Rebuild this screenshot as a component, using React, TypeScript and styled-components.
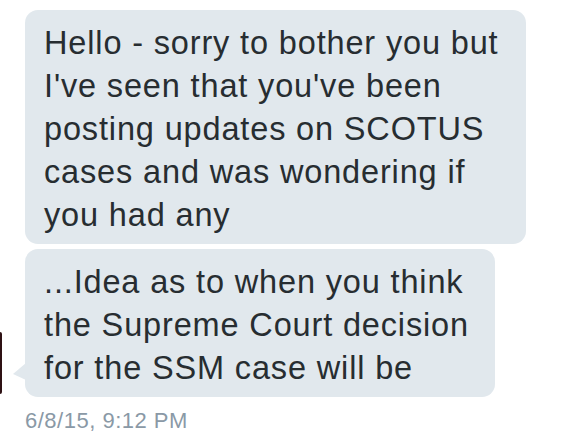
import React from "react";
import styled, { createGlobalStyle } from "styled-components";

const GlobalStyle = createGlobalStyle`
  html, body {
    margin: 0;
    padding: 0;
    background: #ffffff;
  }
  body {
    font-family: "Liberation Sans", Arial, Helvetica, sans-serif;
    -webkit-font-smoothing: antialiased;
  }
`;

const Thread = styled.div`
  display: flex;
  flex-direction: column;
  gap: 5px;
  padding: 10px 0 0 0;
`;

const Row = styled.div`
  display: flex;
  align-items: flex-end;
`;

const AvatarSlot = styled.div`
  width: 25px;
  flex-shrink: 0;
  display: flex;
  align-items: flex-end;
  padding-bottom: 3px;
`;

const AvatarEdge = styled.div`
  width: 2px;
  height: 62px;
  background: #2e1114;
  border-radius: 0 2px 2px 0;
`;

const Bubble = styled.div<{ $width: number; $tail?: boolean }>`
  position: relative;
  box-sizing: border-box;
  width: ${(p) => p.$width}px;
  padding: 12px 6px 7px 19px;
  background: #e1e8ed;
  border-radius: 13px;
  color: #272d31;
  font-size: 32.5px;
  letter-spacing: 0.85px;
  line-height: 43px;
  white-space: pre-line;

  &::before {
    content: ${(p) => (p.$tail ? '""' : "none")};
    position: absolute;
    left: -12px;
    bottom: 17px;
    width: 0;
    height: 0;
    border-right: 13px solid #e1e8ed;
    border-top: 11px solid transparent;
    border-bottom: 6px solid transparent;
  }
`;

const Stamp = styled.div`
  margin: 12px 0 0 25px;
  color: #8a99a6;
  font-size: 22px;
  letter-spacing: 0.5px;
  line-height: 24px;
`;

const messages = [
  {
    text: "Hello - sorry to bother you but\nI've seen that you've been\nposting updates on SCOTUS\ncases and was wondering if\nyou had any",
    width: 501,
    last: false,
  },
  {
    text: "...Idea as to when you think\nthe Supreme Court decision\nfor the SSM case will be",
    width: 470,
    last: true,
  },
];

export default function App() {
  return (
    <>
      <GlobalStyle />
      <Thread>
        {messages.map((m, i) => (
          <Row key={i}>
            <AvatarSlot>{m.last ? <AvatarEdge /> : null}</AvatarSlot>
            <Bubble $width={m.width} $tail={m.last}>
              {m.text}
            </Bubble>
          </Row>
        ))}
      </Thread>
      <Stamp>6/8/15, 9:12 PM</Stamp>
    </>
  );
}
